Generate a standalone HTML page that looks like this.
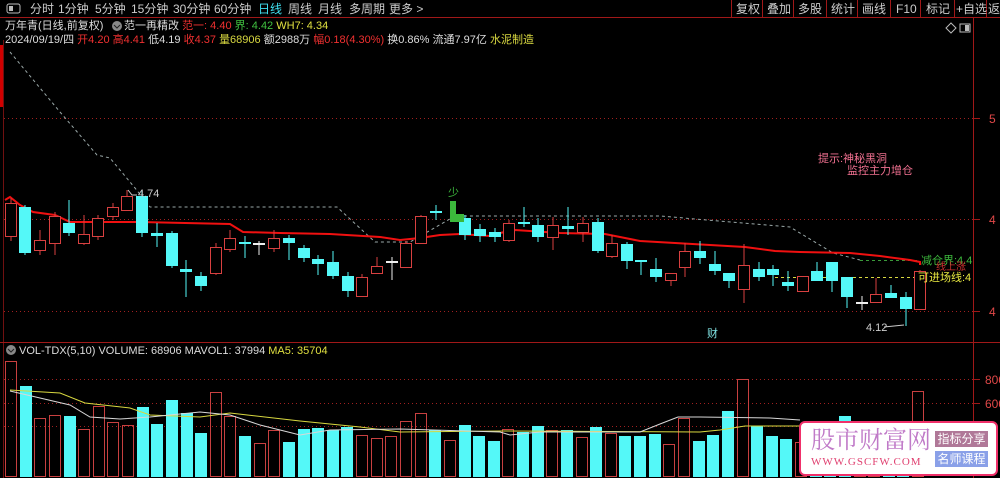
<!DOCTYPE html>
<html><head><meta charset="utf-8"><style>
body{margin:0;background:#000;width:1000px;height:478px;overflow:hidden;position:relative;font-family:"Liberation Sans","Noto Sans CJK SC",sans-serif;}
.t{position:absolute;white-space:nowrap;font-size:11px;line-height:14px;}
.tb span{position:absolute;top:0}
</style></head><body>
<svg width="1000" height="478" style="position:absolute;left:0;top:0" font-family="Liberation Sans, Noto Sans CJK SC, sans-serif">
<line x1="0" y1="17.5" x2="1000" y2="17.5" stroke="#a01818"/>
<line x1="973.5" y1="18" x2="973.5" y2="478" stroke="#a01818"/>
<line x1="3.5" y1="40" x2="3.5" y2="478" stroke="#701010"/>
<rect x="0" y="45" width="3" height="62" fill="#d00000"/>
<line x1="0" y1="342.5" x2="1000" y2="342.5" stroke="#a01818"/>
<g stroke="#a01818" stroke-width="1">
<line x1="731.5" y1="0" x2="731.5" y2="17"/><line x1="762.5" y1="0" x2="762.5" y2="17"/><line x1="793.5" y1="0" x2="793.5" y2="17"/><line x1="826.5" y1="0" x2="826.5" y2="17"/><line x1="857.5" y1="0" x2="857.5" y2="17"/><line x1="890.5" y1="0" x2="890.5" y2="17"/><line x1="920.5" y1="0" x2="920.5" y2="17"/><line x1="954.5" y1="0" x2="954.5" y2="17"/><line x1="986.5" y1="0" x2="986.5" y2="17"/>
</g>
<g stroke="#a02020" stroke-dasharray="1,3">
<line x1="4" y1="118.5" x2="973" y2="118.5"/><line x1="4" y1="219.5" x2="973" y2="219.5"/><line x1="4" y1="311.5" x2="973" y2="311.5"/>
<line x1="4" y1="379.5" x2="973" y2="379.5"/><line x1="4" y1="403.5" x2="973" y2="403.5"/><line x1="4" y1="426.5" x2="973" y2="426.5"/>
</g>
<g stroke="#a01818"><line x1="973" y1="118.5" x2="980" y2="118.5"/><line x1="973" y1="219.5" x2="980" y2="219.5"/><line x1="973" y1="311.5" x2="980" y2="311.5"/><line x1="973" y1="379.5" x2="980" y2="379.5"/><line x1="973" y1="403.5" x2="980" y2="403.5"/></g>
<g fill="#e04848" font-size="12"><text x="989" y="123">5</text><text x="989" y="224">4</text><text x="989" y="316">4</text><text x="985" y="384">800</text><text x="985" y="408">600</text></g>
<polyline fill="none" stroke="#9aa8a8" stroke-dasharray="3,3" points="10,52 60,112 97,155 110,158 135,188 150,207 337,207 375,242 410,242 455,216 660,216 790,227 833,253 860,260"/>
<line x1="860" y1="260.5" x2="918" y2="260.5" stroke="#3a9a3a" stroke-dasharray="3,3"/>
<line x1="775" y1="277.5" x2="918" y2="277.5" stroke="#d8d840" stroke-dasharray="3,3"/>
<polyline fill="none" stroke="#f01010" stroke-width="2" points="5,200 10,197 20,205 33,212 55,215 70,222 100,222 140,222 230,224 243,232 280,233 330,234 380,237 400,240 420,238 440,235 460,234 490,236 500,233 515,230 560,233 605,234 620,237 640,241 710,245 745,247 775,251 800,252 850,253 880,256 910,260 920,262 920,265"/>
<g id="c"></g>
<polyline fill="none" stroke="#d8d840" points="10,390 60,393 85,403 130,408 150,415 200,417 230,413 300,421 360,427 400,432 500,431 700,432 720,430 745,426 800,426 830,428"/>
<polyline fill="none" stroke="#d8d8d8" points="10,391 40,398 70,405 90,417 120,419 150,417 200,412 230,415 260,425 300,435 330,430 400,429 500,432 510,435 540,432 640,432 660,424 678,417 700,417 770,418 800,420"/>
<g fill="#ccc" font-size="11"><text x="138" y="197">4.74</text><text x="866" y="331">4.12</text></g>
<polyline points="128,190 132,195 137,195" fill="none" stroke="#ccc"/>
<line x1="884" y1="327" x2="904" y2="325" stroke="#ccc"/>
<text x="448" y="196" fill="#3cb83c" font-size="11">少</text>
<path d="M450 201 h6 v13 h8 v8 h-14 z" fill="#3cb83c"/>
<text x="921" y="264" fill="#3cb83c" font-size="11">减仓界:4.4</text>
<text x="936" y="270" fill="#d03030" font-size="10">线上涨</text>
<text x="918" y="281" fill="#e8e840" font-size="11">可进场线:4</text>
<text x="818" y="162" fill="#f07090" font-size="11">提示:神秘黑洞</text>
<text x="847" y="174" fill="#f07090" font-size="11">监控主力增仓</text>
<text x="707" y="337" fill="#7fe0e0" font-size="11">财</text>
<path d="M951 23 l5 5 -5 5 -5 -5z" fill="none" stroke="#bbb"/>
<rect x="960" y="24" width="10" height="8" fill="none" stroke="#bbb"/><rect x="965" y="25" width="4" height="6" fill="#bbb"/>
<rect x="7" y="4" width="13" height="9" rx="2" fill="none" stroke="#bbb"/><rect x="9" y="6" width="4" height="5" fill="#bbb"/>
<circle cx="117" cy="26" r="5" fill="#888"/><path d="M114 25 l3 3 3-3" stroke="#222" fill="none"/>
<circle cx="11" cy="350" r="5" fill="#888"/><path d="M8 349 l3 3 3-3" stroke="#222" fill="none"/>
</svg>
<div class="t tb" style="left:0;top:2px;color:#ccc;font-size:12px"><span style="left:30px">分时</span><span style="left:58px">1分钟</span><span style="left:95px">5分钟</span><span style="left:131px">15分钟</span><span style="left:173px">30分钟</span><span style="left:214px">60分钟</span><span style="left:258px;color:#40e0f0">日线</span><span style="left:288px">周线</span><span style="left:318px">月线</span><span style="left:349px">多周期</span><span style="left:389px">更多 &gt;</span></div>
<div class="t tb" style="left:736px;top:2px;color:#ccc;font-size:12px"><span style="left:0">复权</span><span style="left:31px">叠加</span><span style="left:62px">多股</span><span style="left:95px">统计</span><span style="left:126px">画线</span><span style="left:160px">F10</span><span style="left:190px">标记</span><span style="left:220px">+自选</span><span style="left:252px">返</span></div>
<div class="t" style="left:5px;top:19px;color:#ddd">万年青(日线,前复权)</div>
<div class="t" style="left:124px;top:19px;color:#ddd">范一再精改 <span style="color:#f03030">范一: 4.40</span> <span style="color:#40c040">界: 4.42</span> <span style="color:#e0e040">WH7: 4.34</span></div>
<div class="t" style="left:5px;top:33px;color:#ddd">2024/09/19/四 <span style="color:#f03030">开4.20 高4.41</span> 低4.19 <span style="color:#f03030">收4.37</span> <span style="color:#d8d840">量68906</span> 额2988万 <span style="color:#f03030">幅0.18(4.30%)</span> 换0.86% 流通7.97亿 <span style="color:#d8d840">水泥制造</span></div>
<div class="t" style="left:19px;top:344px;color:#ddd">VOL-TDX(5,10) VOLUME: 68906 MAVOL1: 37994 <span style="color:#e0e040">MA5: 35704</span></div>
<div style="position:absolute;left:799px;top:421px;width:195px;height:51px;background:#fff;border:2px solid #f0306a;border-radius:6px"></div>
<div class="t" style="left:811px;top:424px;font-size:24px;line-height:28px;color:#c07ac8;font-family:'Noto Serif CJK SC',serif">股市财富网</div>
<div class="t" style="left:811px;top:455px;font-size:11px;color:#e04070;font-family:'Liberation Serif',serif;letter-spacing:1px">WWW.GSCFW.COM</div>
<div class="t" style="left:935px;top:431px;width:53px;height:16px;background:#b07898;color:#fff;text-align:center;font-size:12px;line-height:16px">指标分享</div>
<div class="t" style="left:935px;top:451px;width:53px;height:16px;background:#8aa0e8;color:#fff;text-align:center;font-size:12px;line-height:16px">名师课程</div>
<script>
var C=[[5,203,236,198,241,'r'],[19,207,253,205,255,'c'],[34,240,250,230,255,'r'],[49,216,243,212,255,'r'],[63,223,233,200,236,'c'],[78,234,243,215,245,'r'],[92,218,236,215,240,'r'],[107,207,216,203,220,'r'],[121,196,210,190,210,'r'],[136,196,233,190,237,'c'],[151,233,236,223,247,'c'],[166,233,266,231,268,'c'],[180,269,272,260,297,'c'],[195,276,286,272,291,'c'],[210,247,273,243,275,'r'],[224,238,249,230,252,'r'],[239,242,244,236,258,'c'],[253,243,245,241,255,'w'],[268,238,248,230,252,'r'],[283,238,243,235,260,'c'],[298,248,258,245,262,'c'],[312,259,264,255,275,'c'],[327,262,276,251,279,'c'],[342,276,291,272,297,'c'],[356,277,296,274,297,'r'],[371,266,273,257,273,'r'],[386,261,263,257,280,'w'],[400,243,267,241,267,'r'],[415,216,243,215,243,'r'],[430,211,213,205,220,'c'],null,[459,218,235,215,240,'c'],[474,229,236,224,242,'c'],[489,232,237,228,242,'c'],[503,223,240,220,242,'r'],[518,222,224,207,227,'c'],[532,225,237,218,242,'c'],[547,225,237,217,250,'r'],[562,226,229,207,235,'c'],[577,223,232,217,242,'r'],[592,222,251,218,253,'c'],[606,243,256,235,258,'r'],[621,244,261,242,269,'c'],[635,260,261,260,275,'c'],[650,269,277,258,282,'c'],[665,273,280,273,286,'r'],[679,251,267,243,277,'r'],[694,251,258,241,264,'c'],[709,264,271,251,275,'c'],[723,273,281,273,288,'c'],[738,265,289,244,303,'r'],[753,269,277,262,281,'c'],[767,269,275,265,286,'c'],[782,282,286,271,291,'c'],[797,276,291,276,291,'r'],[811,271,281,262,281,'c'],[826,262,281,262,292,'c'],[841,277,297,277,308,'c'],[856,302,304,296,310,'w'],[870,294,302,278,302,'r'],[885,293,298,285,298,'c'],[900,297,309,292,326,'c'],[914,271,309,270,309,'r']];
var V=[[361,'r'],[386,'c'],[418,'r'],[415,'r'],[416,'c'],[429,'r'],[406,'r'],[422,'r'],[425,'r'],[407,'c'],[424,'c'],[400,'c'],[413,'c'],[433,'c'],[392,'r'],[416,'r'],[436,'c'],[443,'r'],[430,'r'],[442,'c'],[429,'c'],[428,'c'],[430,'c'],[427,'c'],[435,'r'],[438,'r'],[436,'r'],[421,'r'],[413,'r'],[430,'c'],[440,'r'],[425,'c'],[436,'c'],[441,'c'],[429,'r'],[432,'c'],[426,'c'],[430,'r'],[430,'c'],[437,'r'],[427,'c'],[433,'r'],[436,'c'],[436,'c'],[434,'c'],[444,'r'],[418,'r'],[441,'c'],[435,'c'],[411,'c'],[379,'r'],[426,'c'],[436,'c'],[439,'c'],[442,'r'],[440,'c'],[430,'c'],[416,'c'],[440,'r'],[436,'r'],[438,'c'],[436,'c'],[391,'r']];
var s='';
V.forEach(function(v,i){var x=Math.round(5+14.63*i);s+=v[1]=='r'?'<rect x="'+(x+.5)+'" y="'+(v[0]+.5)+'" width="11" height="'+(476-v[0])+'" fill="none" stroke="#c84040"/>':'<rect x="'+x+'" y="'+v[0]+'" width="12" height="'+(477-v[0])+'" fill="#54f8f8"/>';});
C.forEach(function(c){if(!c)return;var x=c[0],m=x+6,col=c[5]=='r'?'#d84040':(c[5]=='c'?'#54f8f8':'#eee');
s+='<line x1="'+m+'" y1="'+c[3]+'" x2="'+m+'" y2="'+c[4]+'" stroke="'+col+'"/>';
if(c[5]=='r')s+='<rect x="'+(x+.5)+'" y="'+(c[1]+.5)+'" width="11" height="'+(c[2]-c[1])+'" fill="#000" stroke="'+col+'"/>';
else s+='<rect x="'+x+'" y="'+c[1]+'" width="12" height="'+Math.max(2,c[2]-c[1])+'" fill="'+col+'"/>';});
document.getElementById('c').innerHTML=s;
</script>
</body></html>
